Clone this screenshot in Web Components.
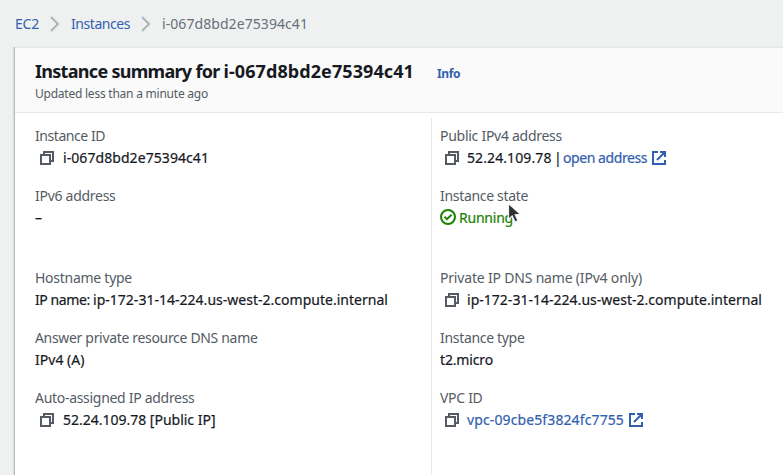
<!DOCTYPE html>
<html lang="en">
<head>
<meta charset="utf-8">
<title>Instance summary</title>
<style>
html,body{margin:0;height:100%;overflow:hidden;background:#eff1f1}
body{font:14px/22px "Noto Sans","Open Sans",sans-serif;color:#16191f}
</style>
</head>
<body>
<instance-page></instance-page>
<script>
const define = (name, markup, setup) => {
  const t = document.createElement('template');
  t.innerHTML = markup;
  customElements.define(name, class extends HTMLElement {
    connectedCallback() {
      if (this.shadowRoot) return;
      this.attachShadow({mode: 'open'}).append(t.content.cloneNode(true));
      if (setup) setup(this, this.shadowRoot);
    }
  });
};

// Text set to a given measure by evenly adjusting the tracking.
define('fit-text', `<style>:host{display:inline-block;white-space:pre;flex:none}</style><span><slot></slot></span>`,
  (el, root) => {
    const w = +el.getAttribute('w');
    const natural = root.querySelector('span').getBoundingClientRect().width;
    el.style.letterSpacing = ((w - natural) / el.textContent.length).toFixed(4) + 'px';
    el.style.width = w + 'px';
  });

define('copy-icon', `<style>:host{display:block;flex:none;width:14px;height:14px;color:#545b64}svg{display:block}</style>
<svg width="14" height="14" fill="none" stroke="currentColor" stroke-width="2"><path d="M1 4h9v9H1zM4 4V1h9v9h-3"/></svg>`);

define('external-icon', `<style>:host{display:block;flex:none;width:14px;height:14px;color:#3360ae}svg{display:block}</style>
<svg width="14" height="14" fill="none" stroke="currentColor" stroke-width="2"><path d="M6 1H1v12h12V9M8 1h5v5M13 1L5 9"/></svg>`);

define('status-icon', `<style>:host{display:block;flex:none;width:16px;height:16px;color:#1d8102}svg{display:block}</style>
<svg width="16" height="16" fill="none" stroke="currentColor" stroke-width="2"><circle cx="8" cy="8" r="7"/><path d="M4.5 7.8L7 10.2L11.5 5.7"/></svg>`);

define('crumb-arrow', `<style>:host{display:block;flex:none;width:10px;height:16px}svg{display:block}</style>
<svg width="10" height="16" fill="none" stroke="#aab7b8" stroke-width="2"><path d="M1 1l7 7-7 7"/></svg>`);

define('mouse-pointer', `<style>:host{display:block;position:absolute;left:507px;top:202px;width:15px;height:22px}svg{display:block}</style>
<svg width="15" height="22"><path d="M1.5 1.5v16l3.7-3.4 2.8 6 3-1.4-2.8-5.9 5.3-.4z" fill="#303030" stroke="#f5f5f5" stroke-width="1.2"/></svg>`);

define('bread-crumbs', `<style>:host{display:flex;align-items:center;height:47px;padding-left:15px;color:#687078;box-sizing:border-box}
.link{color:#3360ae}crumb-arrow{margin:0 11.5px 0 10.5px}</style>
<fit-text class="link" w="24">EC2</fit-text><crumb-arrow></crumb-arrow><fit-text class="link" w="59">Instances</fit-text><crumb-arrow></crumb-arrow><fit-text w="146">i-067d8bd2e75394c41</fit-text>`);

define('summary-header', `<style>:host{display:block;height:66px;box-sizing:border-box;padding:10px 0 0 20px;background:#fafafa;border-top:1px solid #e4e8e8;border-bottom:1px solid #e6e9e9}
.row{display:flex;align-items:baseline}.title{font-size:18px;line-height:26px;font-weight:700}
.info{margin-left:23px;font-size:12px;font-weight:700;color:#3360ae}.sub{display:block;font-size:12px;line-height:17px;color:#545b64}</style>
<div class="row"><fit-text class="title" w="188.5">Instance summary for </fit-text><fit-text class="title" w="190.5">i-067d8bd2e75394c41</fit-text><fit-text class="info" w="23">Info</fit-text></div>
<fit-text class="sub" w="173">Updated less than a minute ago</fit-text>`);

define('info-field', `<style>:host{display:block;height:60px}:host([tall]){height:82px}
.label{color:#545b64;height:22px}.value{display:flex;align-items:center;height:22px;-webkit-text-stroke:.2px currentColor}</style>
<div class="label"><slot name="label"></slot></div><div class="value"><slot></slot></div>`);

define('summary-grid', `<style>:host{display:grid;grid-template-columns:416px 1fr;height:362px}
.col{padding:12px 0 0 20px}.second{border-left:1px solid #e6e9e9;margin-top:5px;padding:7px 0 0 8px}
info-field>fit-text:not([slot]){-webkit-text-stroke:.2px currentColor}
copy-icon{margin:0 9px 0 5px}.second copy-icon{margin-right:8px}.link{color:#3360ae}
.second external-icon{margin-left:5px}status-icon{margin-right:3px;transform:translateY(-1px)}.green{color:#1d8102}</style>
<div class="col">
<info-field><fit-text slot="label" w="70">Instance ID</fit-text><copy-icon></copy-icon><fit-text w="146">i-067d8bd2e75394c41</fit-text></info-field>
<info-field tall><fit-text slot="label" w="80.5">IPv6 address</fit-text><fit-text w="7.5">–</fit-text></info-field>
<info-field><fit-text slot="label" w="97">Hostname type</fit-text><fit-text w="58">IP name: </fit-text><fit-text w="295">ip-172-31-14-224.us-west-2.compute.internal</fit-text></info-field>
<info-field><fit-text slot="label" w="222.5">Answer private resource DNS name</fit-text><fit-text w="49.5">IPv4 (A)</fit-text></info-field>
<info-field><fit-text slot="label" w="159.5">Auto-assigned IP address</fit-text><copy-icon></copy-icon><fit-text w="152.5">52.24.109.78 [Public IP]</fit-text></info-field>
</div>
<div class="col second">
<info-field><fit-text slot="label" w="122">Public IPv4 address</fit-text><copy-icon></copy-icon><fit-text w="84.5">52.24.109.78</fit-text><fit-text w="11.5"> | </fit-text><fit-text class="link" w="84">open address</fit-text><external-icon></external-icon></info-field>
<info-field tall><fit-text slot="label" w="88">Instance state</fit-text><status-icon></status-icon><fit-text class="green" w="54">Running</fit-text></info-field>
<info-field><fit-text slot="label" w="202">Private IP DNS name (IPv4 only)</fit-text><copy-icon></copy-icon><fit-text w="295">ip-172-31-14-224.us-west-2.compute.internal</fit-text></info-field>
<info-field><fit-text slot="label" w="84.5">Instance type</fit-text><fit-text w="53">t2.micro</fit-text></info-field>
<info-field><fit-text slot="label" w="42.5">VPC ID</fit-text><copy-icon></copy-icon><fit-text class="link" w="157">vpc-09cbe5f3824fc7755</fit-text><external-icon></external-icon></info-field>
</div>`);

define('instance-page', `<style>:host{display:block;position:relative;width:783px;height:475px;overflow:hidden}
.panel{margin-left:14px;height:428px;background:#fff;border-left:1px solid #b6bbbb;box-shadow:-1px 0 1px #dcdfdf}</style>
<bread-crumbs></bread-crumbs>
<div class="panel"><summary-header></summary-header><summary-grid></summary-grid></div>
<mouse-pointer></mouse-pointer>`);
</script>
</body>
</html>
